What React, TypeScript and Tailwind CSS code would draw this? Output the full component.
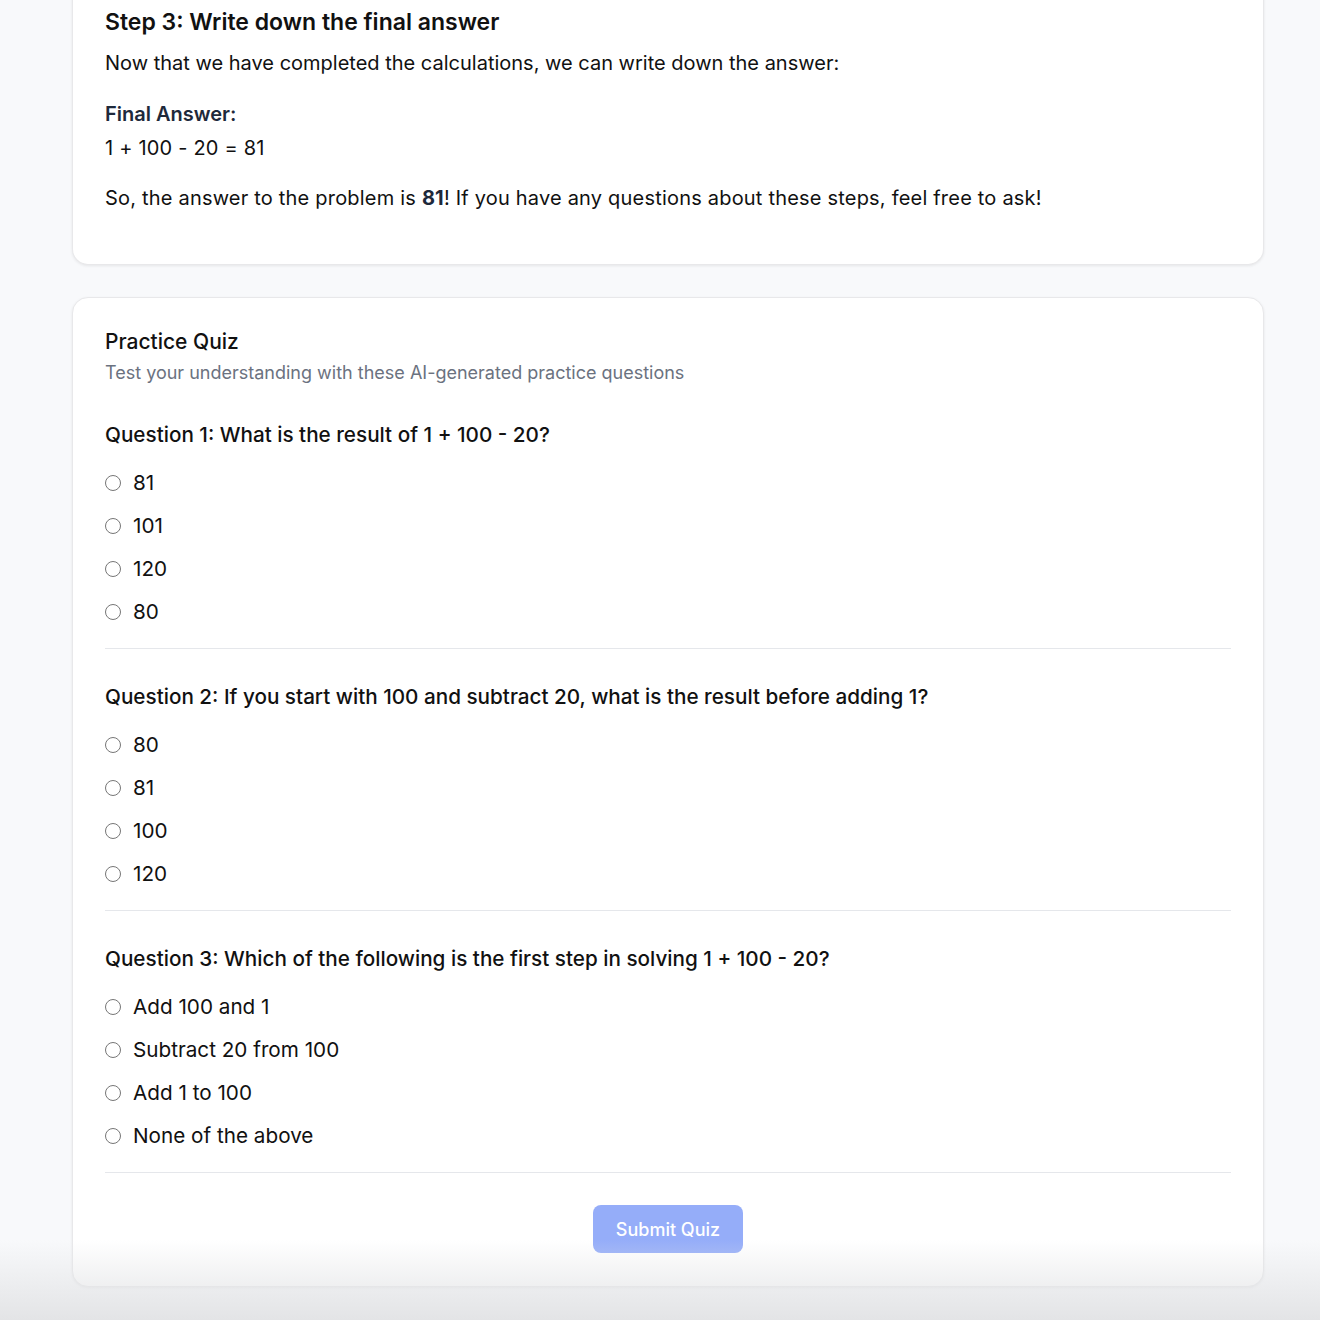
import { useState } from 'react'

type Question = {
  title: string
  options: string[]
}

const questions: Question[] = [
  {
    title: 'Question 1: What is the result of 1 + 100 - 20?',
    options: ['81', '101', '120', '80'],
  },
  {
    title:
      'Question 2: If you start with 100 and subtract 20, what is the result before adding 1?',
    options: ['80', '81', '100', '120'],
  },
  {
    title:
      'Question 3: Which of the following is the first step in solving 1 + 100 - 20?',
    options: ['Add 100 and 1', 'Subtract 20 from 100', 'Add 1 to 100', 'None of the above'],
  },
]

export default function App() {
  const [answers, setAnswers] = useState<Record<number, string>>({})

  return (
    <div className="relative min-h-screen overflow-hidden bg-[#f8f9fb] pb-8 pl-[72px] pr-[56px] font-['Inter',sans-serif] text-[#111]">
      <section className="-mt-5 rounded-b-2xl border border-t-0 border-[#e8e8ea] bg-white px-8 pb-[52px] pt-[28px] shadow-[0_1px_3px_rgba(0,0,0,0.08)]">
        <h3 className="text-[23px] font-semibold leading-7">
          Step 3: Write down the final answer
        </h3>
        <p className="mt-[13px] text-[20px] leading-7">
          Now that we have completed the calculations, we can write down the answer:
        </p>
        <p className="mt-[23px] text-[20px] font-semibold leading-7 text-[#1e293b]">
          Final Answer:
        </p>
        <p className="mt-[6px] text-[20px] leading-7 tracking-[0.01em]">1 + 100 - 20 = 81</p>
        <p className="mt-[22px] text-[20px] leading-7 tracking-[0.01em]">
          So, the answer to the problem is{' '}
          <strong className="font-bold text-[#1e293b]">81</strong>! If you have any
          questions about these steps, feel free to ask!
        </p>
      </section>

      <section className="mt-8 rounded-2xl border border-[#e8e8ea] bg-white px-8 pb-[33px] pt-[30px] shadow-[0_1px_3px_rgba(0,0,0,0.08)]">
        <h2 className="text-[21px] font-medium leading-7">Practice Quiz</h2>
        <p className="mt-[5px] text-[18px] leading-6 text-[#6b7280]">
          Test your understanding with these AI-generated practice questions
        </p>

        <div className="mt-[36px]">
          {questions.map((q, qi) => (
            <div
              key={qi}
              className={qi === 0 ? 'border-b border-[#e5e7eb] pb-[22px]' : 'border-b border-[#e5e7eb] pb-[22px] pt-[34px]'}
            >
              <p className="text-[20.7px] font-medium leading-7">{q.title}</p>
              <div className="mt-[20px] flex flex-col gap-[15px]">
                {q.options.map((opt) => (
                  <label key={opt} className="flex items-center gap-3 text-[20.7px] leading-7">
                    <input
                      type="radio"
                      name={`q${qi}`}
                      checked={answers[qi] === opt}
                      onChange={() => setAnswers({ ...answers, [qi]: opt })}
                      className="h-4 w-4 accent-[#6366f1]"
                    />
                    <span>{opt}</span>
                  </label>
                ))}
              </div>
            </div>
          ))}
        </div>

        <div className="mt-8 flex justify-center">
          <button
            type="button"
            disabled
            className="h-[48px] w-[150px] rounded-lg bg-[#95adf9] text-[18px] font-medium text-white"
          >
            Submit Quiz
          </button>
        </div>
      </section>

      <div className="pointer-events-none absolute inset-x-0 bottom-0 h-20 bg-gradient-to-b from-transparent to-[#e3e4e6]" />
    </div>
  )
}
